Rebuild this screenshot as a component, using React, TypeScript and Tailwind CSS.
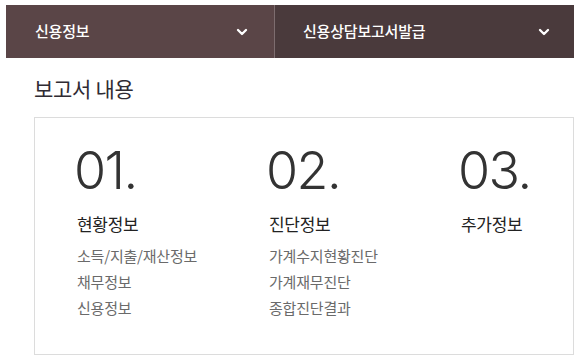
import { ChevronDown } from "lucide-react";

const KR = "font-['Noto_Sans_CJK_KR','Noto_Sans',sans-serif]";

const columns = [
  { no: "01.", title: "현황정보", items: ["소득/지출/재산정보", "채무정보", "신용정보"] },
  { no: "02.", title: "진단정보", items: ["가계수지현황진단", "가계재무진단", "종합진단결과"] },
  { no: "03.", title: "추가정보", items: [] as string[] },
];

function Select({ label, className }: { label: string; className: string }) {
  return (
    <div className={`flex items-center justify-between ${className}`}>
      <span className="text-[15px] font-medium text-white tracking-[-0.2px]">{label}</span>
      <ChevronDown className="w-4 h-4 text-white" strokeWidth={3.5} />
    </div>
  );
}

export default function App() {
  return (
    <main className={`w-[580px] h-[361px] bg-white overflow-hidden ${KR}`}>
      {/* 상단 선택 바 */}
      <div className="mx-[6px] mt-[5px] h-[53px] flex">
        <Select label="신용정보" className="w-[268px] bg-[#5a4547] pl-[29px] pr-[24px]" />
        <div className="w-px bg-[#7d6d6f]" />
        <Select label="신용상담보고서발급" className="flex-1 bg-[#4a3a3c] pl-[28px] pr-[22px]" />
      </div>

      <h2 className="ml-[34px] mt-[18px] text-[21px] leading-[24px] text-[#2f2b33] tracking-[-0.3px]">보고서 내용</h2>

      {/* 보고서 박스 */}
      <div className="ml-[34px] mt-[17px] w-[540px] h-[238px] border border-[#dcdcdc] pl-[39px] pt-[27px] flex">
        {columns.map((c) => (
          <div key={c.no} className="w-[192px] shrink-0">
            <div className="font-['Inter',sans-serif] font-light text-[52px] leading-[52px] text-[#333] tracking-[-1.5px]">
              {c.no}
            </div>
            <div className="mt-[16px] ml-[3px] text-[17px] leading-[22px] text-[#222] tracking-[-0.3px]">
              {c.title}
            </div>
            <ul className="mt-[8px] ml-[3px]">
              {c.items.map((it) => (
                <li key={it} className="text-[15px] leading-[26px] text-[#6a6a6a] tracking-[-0.2px]">
                  {it}
                </li>
              ))}
            </ul>
          </div>
        ))}
      </div>
    </main>
  );
}
